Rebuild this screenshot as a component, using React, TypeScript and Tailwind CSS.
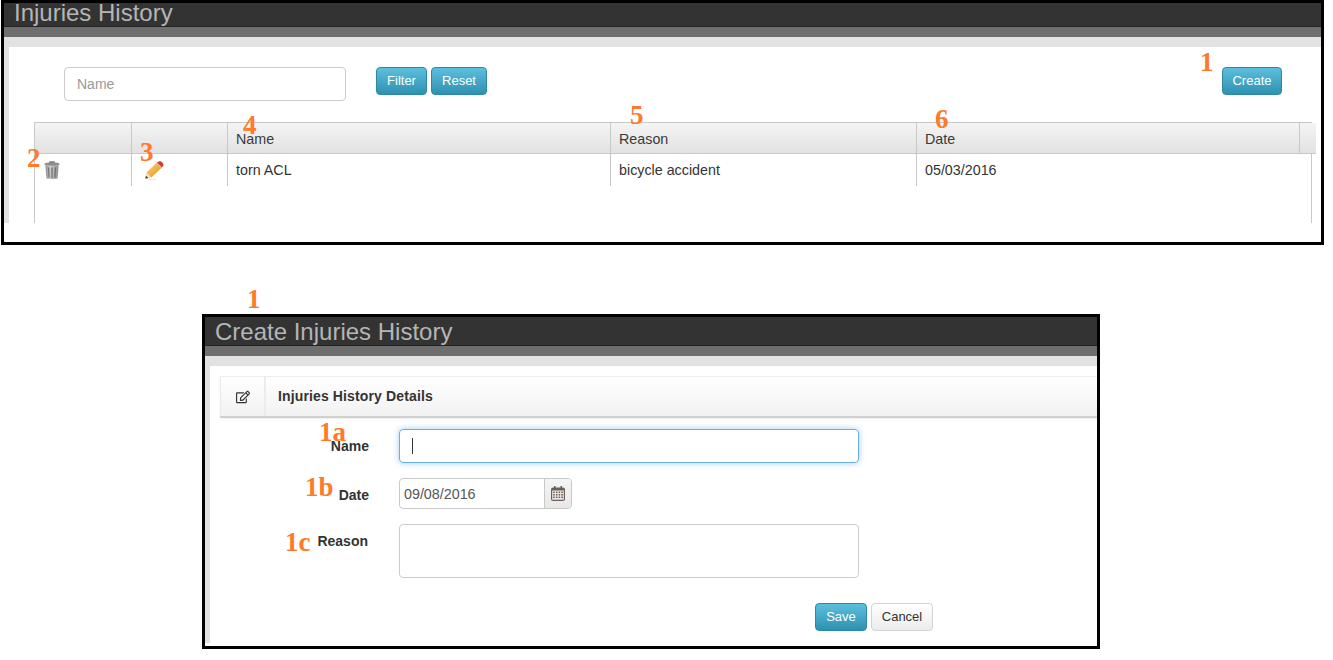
import { FaRegEdit } from "react-icons/fa";

const btn =
  "h-[28px] rounded-[4px] border border-[#2d88a6] bg-gradient-to-b from-[#5bbfdd] to-[#2f91b0] text-white text-[13px] flex items-center justify-center";

function Note({ className, children }: { className: string; children: React.ReactNode }) {
  return (
    <span
      className={`absolute font-['Liberation_Serif',serif] font-bold text-[27px] leading-none text-[#ff7a2b] ${className}`}
    >
      {children}
    </span>
  );
}

function TrashIcon() {
  return (
    <svg width="16" height="19" viewBox="0 0 16 19">
      <defs>
        <linearGradient id="tb" x1="0" x2="1" y1="0" y2="0">
          <stop offset="0" stopColor="#8a8a8a" />
          <stop offset="0.35" stopColor="#cfcfcf" />
          <stop offset="1" stopColor="#8c8c8c" />
        </linearGradient>
      </defs>
      <rect x="5" y="0.2" width="6" height="2" rx="1" fill="#7d7d7d" />
      <ellipse cx="8" cy="3.2" rx="7.6" ry="1.9" fill="#8f8f8f" />
      <path d="M1.4 4.6 L14.6 4.6 L13.6 17.4 Q8 19 2.4 17.4 Z" fill="url(#tb)" />
      <path d="M4.6 6.4 L5.1 16.6 M8 6.6 L8 17 M11.4 6.4 L10.9 16.6" stroke="#6e6e6e" strokeWidth="1.2" fill="none" />
    </svg>
  );
}

function PencilIcon() {
  return (
    <svg width="19" height="19" viewBox="0 0 19 19">
      <defs>
        <linearGradient id="pb" x1="0" x2="1" y1="0" y2="1">
          <stop offset="0" stopColor="#ffd970" />
          <stop offset="1" stopColor="#ec8a17" />
        </linearGradient>
      </defs>
      <path d="M0.3 17.8 L1.5 11.6 L6.4 16.4 Z" fill="#f8dcae" />
      <path d="M0.3 17.8 L0.9 14.8 L3.3 17.1 Z" fill="#3f3a34" />
      <path d="M1.5 11.6 L11.8 1.6 L16.8 6.6 L6.4 16.4 Z" fill="url(#pb)" />
      <path d="M11.8 1.6 L13.6 0.4 Q15.6 -0.3 17.4 1.4 Q19 3.2 18.2 5 L16.8 6.6 Z" fill="#d93a2c" />
      <path d="M11.6 2 L16.6 7" stroke="#c4bdb0" strokeWidth="1.2" />
      <path d="M3 18.4 L11 18.4" stroke="#e6e6e6" strokeWidth="1" />
    </svg>
  );
}

function CalendarIcon() {
  return (
    <svg width="14" height="15" viewBox="0 0 14 15">
      <rect x="0" y="1.5" width="14" height="13.5" rx="2" fill="#6b5f5a" />
      <rect x="3" y="0" width="1.5" height="3" fill="#6b5f5a" />
      <rect x="9.5" y="0" width="1.5" height="3" fill="#6b5f5a" />
      <rect x="1.2" y="4.5" width="11.6" height="9.2" fill="#f1efee" />
      {[5.5, 8, 10.5].map((y) =>
        [2.2, 4.9, 7.6, 10.3].map((x) => (
          <rect key={`${x}-${y}`} x={x} y={y} width="1.6" height="1.6" fill="#6b5f5a" />
        ))
      )}
    </svg>
  );
}

function Title({ children, bar }: { children: React.ReactNode; bar: string }) {
  return (
    <>
      <div className={`${bar} shrink-0 bg-[#333333] border-b border-[#232323] pl-[10px] text-[24px] text-[#b5b5b5]`}>
        {children}
      </div>
      <div className="h-[10px] shrink-0 bg-[#6e6e6e]" />
    </>
  );
}

const head = "h-[31px] bg-gradient-to-b from-[#f4f4f4] to-[#e2e2e2] border-b border-r border-[#c8c8c8] px-[8px] pt-[3px] flex items-center text-[14.3px] text-[#3a3a3a]";
const cell = "h-[32px] border-r border-[#c8c8c8] px-[8px] flex items-center text-[14.3px] text-[#333333]";
const text = "pt-[1px]";
const rows = ["", "", "Name", "Reason", "Date", ""];

export default function App() {
  return (
    <div className="relative w-[1333px] h-[660px] bg-white font-['Liberation_Sans',Arial,sans-serif] overflow-hidden">
      {/* List frame */}
      <div className="ml-[1px] w-[1323px] h-[245px] border-[3px] border-black flex flex-col">
        <Title bar="h-[24px] leading-[20px]">Injuries History</Title>
        <div className="h-[186px] shrink-0 bg-[#e2e2e2] pt-[10px] pl-[5px] flex">
          <div className="flex-1 bg-white flex flex-col pt-[20px] pl-[25px] pr-[9px]">
            <div className="h-[34px] flex items-start shrink-0 pl-[30px] pr-[30px]">
              <input
                placeholder="Name"
                readOnly
                className="w-[282px] h-[34px] rounded-[4px] border border-[#cccccc] px-[12px] text-[14px] placeholder:text-[#999999] outline-none"
              />
              <button className={`${btn} w-[51px] ml-[30px]`}>Filter</button>
              <button className={`${btn} w-[56px] ml-[4px]`}>Reset</button>
              <button className={`${btn} w-[60px] ml-auto`}>Create</button>
            </div>
            <div className="mt-[21px] flex-1 border-t border-l border-r border-[#c8c8c8]">
              <div className="grid grid-cols-[97px_96px_383px_306px_383px_11px]">
                {rows.map((t, i) => (
                  <div key={i} className={`${head} ${i === 5 ? "border-r-0" : ""}`}>{t}</div>
                ))}
                <div className={`${cell} pl-[9px]`}><TrashIcon /></div>
                <div className={`${cell} pl-[13px]`}><PencilIcon /></div>
                <div className={`${cell} ${text}`}>torn ACL</div>
                <div className={`${cell} ${text}`}>bicycle accident</div>
                <div className={`${cell} ${text} border-r-0`}>05/03/2016</div>
                <div className="h-[32px]" />
              </div>
            </div>
          </div>
        </div>
      </div>

      {/* Create frame */}
      <div className="ml-[202px] mt-[69px] w-[898px] h-[335px] border-[3px] border-black flex flex-col">
        <Title bar="h-[29px] leading-[30px]">Create Injuries History</Title>
        <div className="h-[287px] shrink-0 bg-[#e2e2e2] pt-[10px] pl-[5px] flex">
          <div className="flex-1 bg-white pt-[10px]">
            <div className="ml-[10px] h-[42px] flex border-t border-[#ececec] border-b-2 border-b-[#d0d0d0] bg-gradient-to-b from-white to-[#f2f2f2] shadow-[0_1px_2px_rgba(0,0,0,0.08)]">
              <div className="w-[46px] border-l border-r-2 border-[#ececec] flex items-center justify-center text-[#333333]">
                <FaRegEdit size={14} />
              </div>
              <div className="pl-[12px] flex items-center text-[14px] font-bold text-[#333333] tracking-[0.13px]">
                Injuries History Details
              </div>
            </div>

            <div className="mt-[11px] flex flex-col gap-[15px]">
              <div className="flex items-center">
                <label className="w-[159px] text-right text-[14px] font-bold text-[#333333]">Name</label>
                <div className="ml-[30px] w-[460px] h-[34px] rounded-[4px] border border-[#66afe9] shadow-[0_0_6px_rgba(102,175,233,0.6)] pl-[12px] flex items-center">
                  <span className="w-[1px] h-[16px] bg-[#333333]" />
                </div>
              </div>
              <div className="flex items-center">
                <label className="w-[159px] text-right text-[14px] font-bold text-[#333333] pt-[3px]">Date</label>
                <div className="ml-[30px] w-[173px] h-[31px] flex rounded-[4px] border border-[#c8c8c8] overflow-hidden">
                  <input
                    readOnly
                    value="09/08/2016"
                    className="w-[144px] h-full pl-[4px] text-[14.3px] text-[#555555] outline-none"
                  />
                  <div className="flex-1 border-l border-[#c8c8c8] bg-gradient-to-b from-[#f5f5f5] to-[#e8e8e8] flex items-center justify-center">
                    <CalendarIcon />
                  </div>
                </div>
              </div>
              <div className="flex items-start">
                <label className="w-[159px] text-right text-[14px] font-bold text-[#333333] pt-[7px] pr-[1px]">Reason</label>
                <textarea
                  readOnly
                  className="ml-[30px] w-[460px] h-[54px] rounded-[4px] border border-[#cccccc] outline-none resize-none"
                />
              </div>
            </div>

            <div className="mt-[25px] pl-[605px] flex gap-[4px]">
              <button className={`${btn} w-[52px]`}>Save</button>
              <button className="w-[62px] h-[28px] rounded-[4px] border border-[#d4d4d4] bg-gradient-to-b from-white to-[#ececec] text-[#333333] text-[13px] flex items-center justify-center">
                Cancel
              </button>
            </div>
          </div>
        </div>
      </div>

      <Note className="left-[1200px] top-[49px]">1</Note>
      <Note className="left-[27px] top-[145px]">2</Note>
      <Note className="left-[140px] top-[139px]">3</Note>
      <Note className="left-[243px] top-[112px]">4</Note>
      <Note className="left-[630px] top-[102px]">5</Note>
      <Note className="left-[935px] top-[106px]">6</Note>
      <Note className="left-[247px] top-[286px]">1</Note>
      <Note className="left-[319px] top-[419px]">1a</Note>
      <Note className="left-[305px] top-[474px]">1b</Note>
      <Note className="left-[285px] top-[529px]">1c</Note>
    </div>
  );
}
